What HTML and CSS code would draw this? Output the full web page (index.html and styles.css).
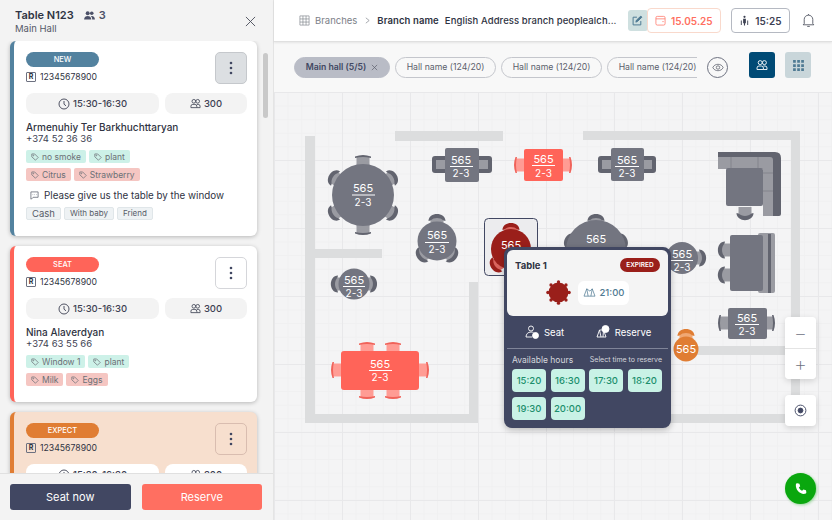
FILE: index.html
```html
<!DOCTYPE html>
<html lang="en">
<head>
<meta charset="UTF-8">
<meta name="viewport" content="width=device-width, initial-scale=1.0">
<title>Table N123</title>
<link rel="stylesheet" href="styles.css">
</head>
<body>

<!-- Shared icons -->
<svg class="sprite" width="0" height="0">
  <defs>
    <symbol id="i-clock" viewBox="0 0 12 12"><circle cx="6" cy="6" r="5"/><path d="M6 3v3.2l2 1.6"/></symbol>
    <symbol id="i-people" viewBox="0 0 12 12"><circle cx="4.2" cy="3.6" r="2"/><circle cx="8.4" cy="3.6" r="2"/><path d="M1 10.5V9a2 2 0 0 1 2-2h2.400a2 2 0 0 1 2 2v1.500zM7.400 7H9a2 2 0 0 1 2 2v1.500H7.400"/></symbol>
    <symbol id="i-tag" viewBox="0 0 10 10"><path d="M1 1.200h3.600L9 5.600 5.600 9 1 4.800z"/><circle cx="3" cy="3.200" r=".5"/></symbol>
    <symbol id="i-kebab" viewBox="0 0 4 14"><circle cx="2" cy="2" r="1.300"/><circle cx="2" cy="7" r="1.300"/><circle cx="2" cy="12" r="1.300"/></symbol>
    <symbol id="i-chair" viewBox="-10 -6 20 16" overflow="visible">
      <path class="seat" d="M-6.500 1C-3 -1.500 3 -1.500 6.500 1L6.500 9H-6.500z"/>
      <path class="back" d="M-8.500 3C-8.500 -6.500 8.500 -6.500 8.500 3L6.500 2.500C3 -.8 -3 -.8 -6.500 2.500z"/>
    </symbol>
    <symbol id="i-flat" viewBox="-10 -6 20 16" overflow="visible">
      <path class="seat" d="M-6.500 -2H6.500V9H-6.500z"/>
      <path class="back" d="M-8 -2.500Q0 -5.500 8 -2.500L8 -1Q0 -3 -8 -1z"/>
    </symbol>
  </defs>
</svg>

<div class="app">

  <aside class="side">
    <div class="side-head">
      <div>
        <div class="side-title">
          <b>Table N123</b>
          <svg class="ico-people-solid" viewBox="0 0 12 10"><circle cx="4" cy="2.500" r="2.200"/><circle cx="8.500" cy="2.500" r="2"/><path d="M0 9.500C0 6.500 2 5.500 4 5.500s4 1 4 4zM9 9.500C9 7.500 8.500 6.500 7.500 5.700 10 5 12 6.500 12 9.500z"/></svg>
          <b class="side-count">3</b>
        </div>
        <div class="side-sub">Main Hall</div>
      </div>
      <svg class="ico-close" viewBox="0 0 12 12"><path d="M1 1l10 10M11 1L1 11"/></svg>
    </div>

    <div class="cards">
      <div class="card card-new">
        <div class="card-top">
          <div>
            <div class="badge">NEW</div>
            <div class="ref"><span class="ref-r">R</span>12345678900</div>
          </div>
          <button class="kebab"><svg class="ico-kebab"><use href="#i-kebab"/></svg></button>
        </div>
        <div class="pills">
          <div class="pill pill-time"><svg class="ico-line ico-14"><use href="#i-clock"/></svg>15:30-16:30</div>
          <div class="pill pill-guests"><svg class="ico-line ico-12"><use href="#i-people"/></svg>300</div>
        </div>
        <div class="guest">Armenuhiy Ter Barkhuchttaryan</div>
        <div class="phone">+374 52 36 36</div>
        <div class="tags">
          <span class="tag tag-green"><svg class="ico-line ico-9"><use href="#i-tag"/></svg>no smoke</span>
          <span class="tag tag-green"><svg class="ico-line ico-9"><use href="#i-tag"/></svg>plant</span>
        </div>
        <div class="tags">
          <span class="tag tag-red"><svg class="ico-line ico-9"><use href="#i-tag"/></svg>Citrus</span>
          <span class="tag tag-red"><svg class="ico-line ico-9"><use href="#i-tag"/></svg>Strawberry</span>
        </div>
        <div class="note">
          <svg class="ico-note" viewBox="0 0 10 10"><path d="M1 1h8v6H3.500L1.500 9H1z"/><path d="M3 4h.5M5 4h.5M7 4h.5"/></svg>
          Please give us the table by the window
        </div>
        <div class="chips">
          <span class="chip chip-big">Cash</span>
          <span class="chip">With baby</span>
          <span class="chip">Friend</span>
        </div>
      </div>

      <div class="card card-seat">
        <div class="card-top">
          <div>
            <div class="badge">SEAT</div>
            <div class="ref"><span class="ref-r">R</span>12345678900</div>
          </div>
          <button class="kebab"><svg class="ico-kebab"><use href="#i-kebab"/></svg></button>
        </div>
        <div class="pills">
          <div class="pill pill-time"><svg class="ico-line ico-14"><use href="#i-clock"/></svg>15:30-16:30</div>
          <div class="pill pill-guests"><svg class="ico-line ico-12"><use href="#i-people"/></svg>300</div>
        </div>
        <div class="guest">Nina Alaverdyan</div>
        <div class="phone">+374 63 55 66</div>
        <div class="tags">
          <span class="tag tag-green"><svg class="ico-line ico-9"><use href="#i-tag"/></svg>Window 1</span>
          <span class="tag tag-green"><svg class="ico-line ico-9"><use href="#i-tag"/></svg>plant</span>
        </div>
        <div class="tags">
          <span class="tag tag-red"><svg class="ico-line ico-9"><use href="#i-tag"/></svg>Milk</span>
          <span class="tag tag-red"><svg class="ico-line ico-9"><use href="#i-tag"/></svg>Eggs</span>
        </div>
      </div>

      <div class="card card-expect">
        <div class="card-top">
          <div>
            <div class="badge">EXPECT</div>
            <div class="ref"><span class="ref-r">R</span>12345678900</div>
          </div>
          <button class="kebab"><svg class="ico-kebab"><use href="#i-kebab"/></svg></button>
        </div>
        <div class="pills">
          <div class="pill pill-time"><svg class="ico-line ico-14"><use href="#i-clock"/></svg>15:30-16:30</div>
          <div class="pill pill-guests"><svg class="ico-line ico-12"><use href="#i-people"/></svg>300</div>
        </div>
      </div>

      <div class="scroll-thumb"></div>
    </div>

    <div class="side-foot">
      <button class="btn btn-seat">Seat now</button>
      <button class="btn btn-reserve">Reserve</button>
    </div>
  </aside>

  <main class="main">
    <header class="topbar">
      <svg class="ico-branches" viewBox="0 0 12 12"><path d="M1 1h10v10H1zM1 4.300h10M1 7.700h10M4.300 1v10M7.700 1v10"/></svg>
      <span class="crumb">Branches</span>
      <svg class="ico-chev" viewBox="0 0 6 8"><path d="M1 .8L5 4 1 7.200"/></svg>
      <b class="crumb-name">Branch name</b>
      <span class="crumb-addr">English Address branch peoplealch...</span>
      <div class="edit">
        <svg viewBox="0 0 10 10"><path d="M8 5.500V9H1V2h3.500"/><path class="edit-pen" d="M3.500 6.500L4 4.800 8 1l1 1-4 3.800z"/></svg>
      </div>
      <div class="date">
        <svg viewBox="0 0 12 12"><rect x="1" y="1.500" width="10" height="9.500" rx="1.500"/><path d="M1 4.200h10M8 7.200h1.500"/></svg>
        15.05.25
      </div>
      <div class="clock">
        <svg viewBox="0 0 12 12"><circle cx="6" cy="2" r="1.200"/><path d="M4.500 4.200h3V9h-3zM2 6h1v5H2zM9 6h1v5H9zM5.400 9h1.200v2.500H5.400z"/></svg>
        15:25
      </div>
      <svg class="ico-bell" viewBox="0 0 12 14"><path d="M2 10V6a4 4 0 0 1 8 0v4l1 1H1zM6 1v1M4.800 12.500h2.400"/></svg>
    </header>

    <div class="hallbar">
      <div class="halls">
        <span class="hall hall-on">Main hall (5/5)<svg class="ico-x" viewBox="0 0 8 8"><path d="M1 1l6 6M7 1L1 7"/></svg></span>
        <span class="hall">Hall name (124/20)</span>
        <span class="hall">Hall name (124/20)</span>
        <span class="hall">Hall name (124/20)</span>
      </div>
      <div class="eye">
        <svg viewBox="0 0 14 10"><path d="M1 5c2-5 10-5 12 0-2 5-10 5-12 0z"/><circle cx="7" cy="5" r="2"/></svg>
      </div>
      <button class="view view-on">
        <svg class="ico-line ico-14"><use href="#i-people"/></svg>
      </button>
      <button class="view view-off">
        <svg viewBox="0 0 12 12"><path d="M1 1h2.500v2.500H1zM4.800 1h2.500v2.500H4.800zM8.500 1H11v2.500H8.500zM1 4.800h2.500v2.500H1zM4.800 4.800h2.500v2.500H4.800zM8.500 4.800H11v2.500H8.500zM1 8.500h2.500V11H1zM4.800 8.500h2.500V11H4.800zM8.500 8.500H11V11H8.500z"/></svg>
      </button>
    </div>

    <div class="canvas">
      <!-- Floor plan, coordinates are window pixels -->
      <svg class="floor" viewBox="274 92 558 428">
        <g class="walls">
          <rect x="395" y="131" width="108" height="10"/>
          <rect x="305" y="136" width="10" height="287"/>
          <rect x="305" y="249" width="77" height="9"/>
          <rect x="305" y="414" width="173" height="9"/>
          <rect x="469" y="282" width="9" height="141"/>
          <rect x="583" y="131" width="217" height="9"/>
          <rect x="791" y="131" width="9" height="292"/>
          <rect x="680" y="346" width="120" height="9"/>
          <rect x="660" y="414" width="140" height="9"/>
        </g>

        <!-- big round -->
        <g class="t-gray">
          <use href="#i-flat" x="-10" y="-6" width="20" height="16" transform="translate(363 159)"/>
          <use href="#i-flat" x="-10" y="-6" width="20" height="16" transform="translate(363 231) rotate(180)"/>
          <use href="#i-chair" x="-10" y="-6" width="20" height="16" transform="translate(333 177) rotate(-58)"/>
          <use href="#i-chair" x="-10" y="-6" width="20" height="16" transform="translate(393 177) rotate(58)"/>
          <use href="#i-chair" x="-10" y="-6" width="20" height="16" transform="translate(333 214) rotate(-122)"/>
          <use href="#i-chair" x="-10" y="-6" width="20" height="16" transform="translate(393 214) rotate(122)"/>
          <circle class="top" cx="363" cy="195" r="31"/>
          <text class="num" x="363" y="192">565</text><path class="rule" d="M352 195h23"/><text class="cap" x="363" y="206">2-3</text>
        </g>

        <!-- rect 2 chairs -->
        <g class="t-gray">
          <rect class="back" x="432" y="156" width="60" height="17" rx="3"/>
          <rect class="seat" x="436" y="160" width="52" height="9"/>
          <rect class="top" x="445" y="148" width="34" height="34" rx="2"/>
          <text class="num" x="461" y="164">565</text><path class="rule" d="M450 166.500h23"/><text class="cap" x="461" y="177">2-3</text>
        </g>

        <g class="t-red">
          <use href="#i-flat" x="-10" y="-6" width="20" height="16" transform="translate(518 165) rotate(-90)"/>
          <use href="#i-flat" x="-10" y="-6" width="20" height="16" transform="translate(568 165) rotate(90)"/>
          <rect class="top" x="524" y="149" width="39" height="32" rx="2"/>
          <text class="num" x="543.500" y="163">565</text><path class="rule" d="M532 165.500h23"/><text class="cap" x="543.500" y="177">2-3</text>
        </g>

        <g class="t-gray">
          <rect class="back" x="598" y="156" width="58" height="17" rx="3"/>
          <rect class="seat" x="602" y="160" width="50" height="9"/>
          <rect class="top" x="611" y="148" width="33" height="33" rx="2"/>
          <text class="num" x="627" y="164">565</text><path class="rule" d="M615 166.500h24"/><text class="cap" x="627" y="177">2-3</text>
        </g>

        <!-- three seat round -->
        <g class="t-gray">
          <use href="#i-chair" x="-10" y="-6" width="20" height="16" transform="translate(437 218)"/>
          <use href="#i-chair" x="-10" y="-6" width="20" height="16" transform="translate(421 256) rotate(-125)"/>
          <use href="#i-chair" x="-10" y="-6" width="20" height="16" transform="translate(453 256) rotate(125)"/>
          <circle class="top" cx="437" cy="241" r="19.500"/>
          <text class="num" x="437" y="239">565</text><path class="rule" d="M425 242.500h24"/><text class="cap" x="437" y="253">2-3</text>
        </g>

        <!-- selected table -->
        <rect class="picked" x="484.500" y="218.500" width="53" height="57" rx="4"/>
        <g class="t-dark">
          <use href="#i-chair" x="-10" y="-6" width="20" height="16" transform="translate(511 227)"/>
          <use href="#i-chair" x="-10" y="-6" width="20" height="16" transform="translate(495 266) rotate(-125)"/>
          <circle class="top" cx="511" cy="249" r="20"/>
          <text class="num" x="511" y="249">565</text>
        </g>

        <g class="t-gray">
          <use href="#i-chair" x="-10" y="-6" width="20" height="16" transform="translate(596 218)"/>
          <use href="#i-chair" x="-10" y="-6" width="20" height="16" transform="translate(569 240) rotate(-60)"/>
          <use href="#i-chair" x="-10" y="-6" width="20" height="16" transform="translate(623 240) rotate(60)"/>
          <circle class="top" cx="596" cy="250" r="30"/>
          <text class="num" x="596" y="243">565</text>
        </g>

        <g class="t-gray">
          <use href="#i-chair" x="-10" y="-6" width="20" height="16" transform="translate(335 284) rotate(-90)"/>
          <use href="#i-chair" x="-10" y="-6" width="20" height="16" transform="translate(373 284) rotate(90)"/>
          <circle class="top" cx="354" cy="284" r="15.500"/>
          <text class="num" x="354" y="284">565</text><path class="rule" d="M343 286.500h22"/><text class="cap" x="354" y="297">2-3</text>
        </g>

        <g class="t-gray">
          <use href="#i-chair" x="-10" y="-6" width="20" height="16" transform="translate(664 258) rotate(-90)"/>
          <use href="#i-chair" x="-10" y="-6" width="20" height="16" transform="translate(702 258) rotate(90)"/>
          <circle class="top" cx="682" cy="258" r="16"/>
          <text class="num" x="682" y="258">565</text><path class="rule" d="M671 260.500h22"/><text class="cap" x="682" y="271">2-3</text>
        </g>

        <!-- long table -->
        <g class="t-red">
          <use href="#i-flat" x="-10" y="-6" width="20" height="16" transform="translate(367 346)"/>
          <use href="#i-flat" x="-10" y="-6" width="20" height="16" transform="translate(393 346)"/>
          <use href="#i-flat" x="-10" y="-6" width="20" height="16" transform="translate(367 395) rotate(180)"/>
          <use href="#i-flat" x="-10" y="-6" width="20" height="16" transform="translate(393 395) rotate(180)"/>
          <use href="#i-flat" x="-10" y="-6" width="20" height="16" transform="translate(335 370) rotate(-90)"/>
          <use href="#i-flat" x="-10" y="-6" width="20" height="16" transform="translate(425 370) rotate(90)"/>
          <rect class="top" x="341" y="351" width="78" height="39" rx="3"/>
          <text class="num" x="380" y="368">565</text><path class="rule" d="M369 370.500h23"/><text class="cap" x="380" y="381">2-3</text>
        </g>

        <g class="t-gray">
          <use href="#i-flat" x="-10" y="-6" width="20" height="16" transform="translate(722 323) rotate(-90)"/>
          <use href="#i-flat" x="-10" y="-6" width="20" height="16" transform="translate(771 323) rotate(90)"/>
          <rect class="top" x="728" y="308" width="39" height="31" rx="2"/>
          <text class="num" x="747" y="322">565</text><path class="rule" d="M735 324.500h24"/><text class="cap" x="747" y="335">2-3</text>
        </g>

        <!-- corner sofa -->
        <g class="t-gray">
          <path class="seat" d="M718 157H773V216H763V169H718z"/>
          <path class="back" d="M718 152h57q6 0 6 6v56q0 2-2 2h-6V160q0-3-3-3H718z"/>
          <path class="sofa-line" d="M731 157v11M758 157v11M763 173h10M763 191h10"/>
          <use href="#i-chair" x="-10" y="-6" width="20" height="16" transform="translate(745 216) rotate(180)"/>
          <rect class="top" x="726" y="168" width="37" height="38" rx="2"/>
        </g>

        <g class="t-gray">
          <rect class="seat" x="758" y="233" width="17" height="60" rx="2"/>
          <rect class="back" x="768" y="234" width="3" height="59"/>
          <use href="#i-chair" x="-10" y="-6" width="20" height="16" transform="translate(722 250) rotate(-90)"/>
          <use href="#i-chair" x="-10" y="-6" width="20" height="16" transform="translate(722 275) rotate(-90)"/>
          <rect class="top" x="730" y="235" width="33" height="56" rx="2"/>
        </g>

        <g class="t-orange">
          <use href="#i-chair" x="-10" y="-6" width="20" height="16" transform="translate(686 333)"/>
          <circle class="top" cx="686" cy="349" r="12.500"/>
          <text class="num" x="686" y="353">565</text>
        </g>
      </svg>

      <!-- Table popup -->
      <div class="popup">
        <div class="pop-head">
          <div class="pop-title"><b>Table 1</b><span class="expired">EXPIRED</span></div>
          <div class="pop-info">
            <svg class="pop-dish" viewBox="0 0 24 24">
              <circle cx="12" cy="12" r="9.500"/>
              <circle cx="12" cy="1.800" r="1.600"/><circle cx="12" cy="22.200" r="1.600"/><circle cx="1.800" cy="12" r="1.600"/><circle cx="22.200" cy="12" r="1.600"/>
              <circle cx="4.800" cy="4.800" r="1.600"/><circle cx="19.200" cy="4.800" r="1.600"/><circle cx="4.800" cy="19.200" r="1.600"/><circle cx="19.200" cy="19.200" r="1.600"/>
            </svg>
            <div class="pop-time">
              <svg viewBox="0 0 14 12"><path d="M1 10L4 2l3.500 2.500L10 2l3 8zM4 2l1.500 8M10 2L8.500 10"/></svg>
              21:00
            </div>
          </div>
        </div>
        <div class="pop-actions">
          <div class="pop-act pop-act-seat">
            <svg viewBox="0 0 14 14"><circle cx="6" cy="3.500" r="2.500"/><path d="M1 12c0-3 2-5 5-5 1 0 2 .2 2.500.6M1 12h6"/><circle class="fill" cx="10.500" cy="10.500" r="3"/></svg>
            Seat
          </div>
          <div class="pop-act">
            <svg viewBox="0 0 14 14"><path d="M1 12L3.500 5h4L10 12zM3.500 5L5 12M7.500 5L7 12"/><circle class="fill" cx="9.500" cy="4" r="3.500"/></svg>
            Reserve
          </div>
        </div>
        <div class="pop-hours">
          <div class="pop-labels"><span>Available hours</span><small>Select time to reserve</small></div>
          <div class="slots">
            <span class="slot">15:20</span>
            <span class="slot">16:30</span>
            <span class="slot">17:30</span>
            <span class="slot">18:20</span>
            <span class="slot">19:30</span>
            <span class="slot">20:00</span>
          </div>
        </div>
      </div>

      <!-- Map controls -->
      <div class="zoombox">
        <button class="ctl">&minus;</button>
        <button class="ctl">+</button>
      </div>
      <button class="ctl locate">
        <svg viewBox="0 0 14 14"><circle cx="7" cy="7" r="5.800"/><circle class="fill" cx="7" cy="7" r="2.600"/></svg>
      </button>
      <button class="call">
        <svg viewBox="0 0 24 24"><path d="M6.600 3.500l3 .5 1.200 4-2 1.800c1 2.200 2.700 3.900 4.900 4.900l1.800-2 4 1.200.5 3c.1 1-.6 2.100-1.800 2.300C10.600 20.500 3.500 13.400 4.300 5.300c.2-1.200 1.300-1.900 2.300-1.800z"/></svg>
      </button>
    </div>
  </main>
</div>

</body>
</html>
```

FILE: styles.css
```css
* {
  box-sizing: border-box;
}
html, body {
  margin: 0;
  height: 100%;
}
body {
  font-family: Inter, "Open Sans", sans-serif;
  color: #2f3342;
  overflow: hidden;
}
button {
  font-family: inherit;
  padding: 0;
  border: none;
  cursor: pointer;
}
.sprite {
  position: absolute;
}
.app {
  display: flex;
  width: 832px;
  height: 520px;
}

/* Sidebar */
.side {
  width: 274px;
  flex: none;
  display: flex;
  flex-direction: column;
  background-color: #f3f3f3;
  border-right: 1px solid #e4e4e4;
}
.side-head {
  height: 41px;
  flex: none;
  display: flex;
  justify-content: space-between;
  padding: 8px 17px 0 15px;
}
.side-title {
  display: flex;
  align-items: center;
  gap: 4px;
  font-size: 11px;
  font-weight: 600;
  line-height: 14px;
}
.side-title b {
  font-weight: 600;
}
.side-count {
  color: #4c5168;
}
.side-sub {
  font-size: 9.500px;
  line-height: 13px;
  color: #555967;
}
.ico-people-solid {
  width: 11px;
  height: 9px;
  margin-left: 6px;
  fill: #4c5168;
}
.ico-close {
  width: 11px;
  height: 11px;
  margin-top: 8px;
  fill: none;
  stroke: #4b4f5c;
  stroke-width: 1;
}
.cards {
  position: relative;
  flex: 1;
  min-height: 0;
  overflow: hidden;
  display: flex;
  flex-direction: column;
  gap: 10px;
  padding: 0 16px 0 10px;
}
.scroll-thumb {
  position: absolute;
  left: 263px;
  top: 12px;
  width: 5px;
  height: 65px;
  border-radius: 3px;
  background-color: #c9c9c9;
}
.card {
  flex: none;
  background-color: #fff;
  border-left: 4px solid #53829f;
  border-radius: 6px;
  box-shadow: 0 1px 4px rgba(0, 0, 0, 0.25);
  padding: 11px 10px 16px 12px;
}
.card-seat {
  border-left-color: #ff6459;
}
.card-expect {
  border-left-color: #e07d33;
  background-color: #f7dfce;
}
.card-top {
  display: flex;
  justify-content: space-between;
  height: 32px;
}
.badge {
  width: 73px;
  height: 15px;
  border-radius: 8px;
  background-color: #53829f;
  color: #fff;
  font-size: 7.500px;
  font-weight: 500;
  line-height: 15px;
  text-align: center;
}
.card-seat .badge {
  background-color: #ff6459;
}
.card-expect .badge {
  background-color: #e07d33;
}
.ref {
  display: flex;
  align-items: center;
  gap: 4px;
  margin-top: 5px;
  font-size: 8.700px;
  line-height: 10px;
}
.ref-r {
  width: 10px;
  height: 10px;
  border: 1px solid #6d7180;
  border-radius: 1px;
  font-size: 7px;
  font-weight: 700;
  line-height: 8px;
  text-align: center;
}
.kebab {
  width: 32px;
  height: 32px;
  display: flex;
  align-items: center;
  justify-content: center;
  background-color: #fff;
  border: 1px solid #d5d6da;
  border-radius: 5px;
}
.card-new .kebab {
  background-color: #dcdfe2;
  border-color: #c5c8cc;
}
.card-expect .kebab {
  background-color: transparent;
  border-color: #d9bdb0;
}
.ico-kebab {
  width: 4px;
  height: 14px;
  fill: #414762;
}
.pills {
  display: flex;
  gap: 6px;
  margin-top: 9px;
}
.pill {
  height: 21px;
  display: flex;
  align-items: center;
  justify-content: center;
  gap: 3px;
  background-color: #f3f3f3;
  border-radius: 8px;
  font-size: 9.500px;
  font-weight: 500;
  color: #3d4152;
}
.pill-time {
  width: 133px;
}
.pill-guests {
  width: 82px;
}
.card-expect .pill {
  background-color: #fff;
}
.ico-line {
  fill: none;
  stroke: currentColor;
  stroke-width: 0.9;
}
.ico-14 {
  width: 12px;
  height: 12px;
}
.ico-12 {
  width: 11px;
  height: 11px;
}
.ico-9 {
  width: 8px;
  height: 8px;
}
.guest {
  margin-top: 7px;
  font-size: 10px;
  font-weight: 500;
  line-height: 12px;
}
.phone {
  font-size: 9.500px;
  font-weight: 400;
  line-height: 12px;
  color: #3d4152;
}
.tags {
  display: flex;
  gap: 3px;
  margin-top: 5px;
}
.tag {
  height: 13px;
  display: flex;
  align-items: center;
  gap: 3px;
  padding: 0 5px;
  border-radius: 2px;
  font-size: 8.500px;
  color: #6b7076;
}
.tag-green {
  background-color: #cdf1e8;
}
.tag-red {
  background-color: #f5c6c2;
}
.note {
  display: flex;
  align-items: center;
  gap: 5px;
  margin-top: 8px;
  padding-left: 4px;
  font-size: 9.800px;
  line-height: 13px;
}
.ico-note {
  width: 9px;
  height: 9px;
  fill: none;
  stroke: #555967;
  stroke-width: 0.8;
}
.chips {
  display: flex;
  gap: 3px;
  margin-top: 5px;
}
.chip {
  height: 13px;
  padding: 0 5px;
  background-color: #eef2f4;
  border: 1px solid #e0e6e9;
  border-radius: 2px;
  font-size: 8px;
  line-height: 11px;
  color: #585c68;
}
.chip-big {
  font-size: 9.500px;
}
.side-foot {
  height: 47px;
  flex: none;
  display: flex;
  gap: 11px;
  padding: 10px 11px 0 10px;
  border-top: 1px solid #e0e0e0;
  background-color: #f3f3f3;
  position: relative;
}
.btn {
  width: 121px;
  height: 26px;
  border-radius: 3px;
  color: #fff;
  font-size: 11px;
  font-weight: 400;
}
.btn-seat {
  background-color: #414762;
}
.btn-reserve {
  background-color: #ff6f61;
}

/* Top bar */
.main {
  flex: 1;
  min-width: 0;
  display: flex;
  flex-direction: column;
}
.topbar {
  height: 42px;
  flex: none;
  display: flex;
  align-items: center;
  padding-left: 25px;
  background-color: #fff;
  border-bottom: 1px solid #e0e0e0;
  box-shadow: 0 1px 2px rgba(0, 0, 0, 0.08);
  position: relative;
  z-index: 2;
  font-size: 9.500px;
  white-space: nowrap;
}
.ico-branches {
  width: 11px;
  height: 11px;
  fill: none;
  stroke: #7c8088;
  stroke-width: 0.7;
}
.crumb {
  margin-left: 5px;
  color: #7c8088;
}
.ico-chev {
  width: 5px;
  height: 7px;
  margin: 0 7px 0 8px;
  fill: none;
  stroke: #7c8088;
  stroke-width: 0.8;
}
.crumb-name {
  font-weight: 600;
  letter-spacing: 0.1px;
}
.crumb-addr {
  width: 183px;
  margin-left: 6px;
  font-weight: 500;
  letter-spacing: 0.08px;
}
.edit {
  width: 20px;
  height: 21px;
  display: flex;
  align-items: center;
  justify-content: center;
  background-color: #cfe0e0;
  border-radius: 3px;
}
.edit svg {
  width: 11px;
  height: 11px;
  fill: none;
  stroke: #4f7a93;
  stroke-width: 0.9;
}
.edit .edit-pen {
  fill: #4f7a93;
}
.date {
  width: 74px;
  height: 25px;
  margin-left: -1px;
  position: relative;
  display: flex;
  align-items: center;
  justify-content: center;
  gap: 5px;
  background-color: #fff;
  border: 1px solid #f9d9cc;
  border-radius: 4px;
  color: #ff6f61;
  font-size: 10px;
  font-weight: 600;
}
.date svg {
  width: 11px;
  height: 11px;
  fill: none;
  stroke: #ff6f61;
  stroke-width: 0.8;
}
.clock {
  width: 59px;
  height: 25px;
  margin-left: 10px;
  display: flex;
  align-items: center;
  justify-content: center;
  gap: 5px;
  border: 1px solid #b5b9c2;
  border-radius: 4px;
  font-size: 10px;
  font-weight: 600;
  color: #3d4152;
}
.clock svg {
  width: 11px;
  height: 11px;
  fill: #3d4152;
}
.ico-bell {
  width: 13px;
  height: 15px;
  margin-left: 12px;
  fill: none;
  stroke: #4b4f5c;
  stroke-width: 0.8;
}

/* Hall tabs */
.hallbar {
  height: 50px;
  flex: none;
  display: flex;
  align-items: flex-start;
  padding: 10px 0 0 20px;
  background-color: #f8f8f8;
}
.halls {
  width: 403px;
  height: 21px;
  margin-top: 5px;
  overflow: hidden;
  display: flex;
  gap: 5px;
}
.hall {
  flex: none;
  width: 101px;
  height: 21px;
  border: 1px solid #c4c6cc;
  border-radius: 11px;
  font-size: 8.700px;
  line-height: 19px;
  text-align: center;
  color: #5b5f6c;
  white-space: nowrap;
}
.hall-on {
  width: 96px;
  display: flex;
  align-items: center;
  justify-content: center;
  gap: 5px;
  background-color: #b9bcc6;
  border-color: #b9bcc6;
  color: #414762;
  font-weight: 600;
}
.ico-x {
  width: 7px;
  height: 7px;
  fill: none;
  stroke: #5b5f6c;
  stroke-width: 0.8;
}
.eye {
  width: 21px;
  height: 21px;
  margin: 5px 0 0 10px;
  display: flex;
  align-items: center;
  justify-content: center;
  border: 1px solid #6d7180;
  border-radius: 50%;
}
.eye svg {
  width: 12px;
  height: 9px;
  fill: none;
  stroke: #4b4f5c;
  stroke-width: 0.8;
}
.view {
  width: 26px;
  height: 26px;
  display: flex;
  align-items: center;
  justify-content: center;
  border-radius: 3px;
  margin-left: 21px;
}
.view + .view {
  margin-left: 10px;
}
.view-on {
  background-color: #004a75;
  color: #fff;
}
.view-off {
  background-color: #c9d6da;
}
.view-off svg {
  width: 13px;
  height: 13px;
  fill: #4f7a93;
}

/* Floor */
.canvas {
  position: relative;
  flex: 1;
  min-height: 0;
  overflow: hidden;
  background-color: #f4f4f5;
  background-image:
    linear-gradient(#e8e8ea 1px, transparent 1px),
    linear-gradient(90deg, #e8e8ea 1px, transparent 1px),
    linear-gradient(#f0f0f1 1px, transparent 1px),
    linear-gradient(90deg, #f0f0f1 1px, transparent 1px);
  background-size: 68px 68px, 68px 68px, 13.600px 13.600px, 13.600px 13.600px;
}
.floor {
  position: absolute;
  left: 0;
  top: 0;
  width: 558px;
  height: 428px;
}
.walls rect {
  fill: #dcddde;
}
.t-gray {
  --top: #737580;
  --back: #62646f;
  --seat: #9a9ba2;
}
.t-red {
  --top: #ff6459;
  --back: #f0635a;
  --seat: #ff9c94;
}
.t-dark {
  --top: #9a1f1a;
  --back: #9a1f1a;
  --seat: #d9645d;
}
.t-orange {
  --top: #e07d33;
  --back: #e07d33;
  --seat: #f0a874;
}
.top {
  fill: var(--top);
}
.back {
  fill: var(--back);
}
.seat {
  fill: var(--seat);
}
.sofa-line {
  fill: none;
  stroke: #83848c;
  stroke-width: 1;
}
.num, .cap {
  fill: #fff;
  text-anchor: middle;
  font-size: 11px;
}
.cap {
  font-size: 10px;
}
.rule {
  fill: none;
  stroke: #fff;
  stroke-width: 1;
}
.picked {
  fill: #ececee;
  stroke: #414762;
  stroke-width: 1;
}

/* Popup */
.popup {
  position: absolute;
  left: 230px;
  top: 155px;
  width: 167px;
  height: 181px;
  padding: 3px;
  background-color: #414762;
  border-radius: 8px;
  box-shadow: 0 2px 6px rgba(0, 0, 0, 0.25);
  color: #fff;
}
.pop-head {
  height: 66px;
  background-color: #f4f4f4;
  border-radius: 6px;
  padding: 8px 8px 0;
  color: #2f3342;
}
.pop-title {
  display: flex;
  justify-content: space-between;
  align-items: center;
  font-size: 9.500px;
}
.expired {
  width: 40px;
  height: 14px;
  border-radius: 7px;
  background-color: #9a1f1a;
  color: #fff;
  font-size: 6.500px;
  font-weight: 600;
  line-height: 14px;
  text-align: center;
}
.pop-info {
  display: flex;
  justify-content: center;
  align-items: center;
  gap: 7px;
  margin-top: 8px;
}
.pop-dish {
  width: 25px;
  height: 25px;
  fill: #9a1f1a;
}
.pop-time {
  width: 51px;
  height: 24px;
  display: flex;
  align-items: center;
  justify-content: center;
  gap: 4px;
  background-color: #fff;
  border-radius: 6px;
  color: #4f7a93;
  font-size: 9.500px;
  font-weight: 500;
}
.pop-time svg {
  width: 13px;
  height: 11px;
  fill: none;
  stroke: #4f7a93;
  stroke-width: 0.8;
}
.pop-actions {
  height: 33px;
  display: flex;
  align-items: center;
  border-bottom: 1px solid #7f8498;
  font-size: 9.500px;
}
.pop-act {
  flex: 1;
  display: flex;
  align-items: center;
  justify-content: center;
  gap: 5px;
}
.pop-act-seat {
  flex: none;
  width: 72px;
  padding-left: 3px;
}
.pop-act svg {
  width: 14px;
  height: 14px;
  fill: none;
  stroke: #fff;
  stroke-width: 0.9;
}
.pop-act .fill {
  fill: #fff;
}
.pop-hours {
  padding: 5px 5px 0;
}
.pop-labels {
  display: flex;
  justify-content: space-between;
  align-items: center;
  font-size: 8.500px;
  line-height: 12px;
  color: #d5d7de;
}
.pop-labels small {
  font-size: 7px;
  padding-right: 1px;
}
.slots {
  display: grid;
  grid-template-columns: repeat(4, 34px);
  grid-auto-rows: 23px;
  gap: 5px 4.500px;
  margin-top: 3px;
}
.slot {
  background-color: #c9f2e6;
  border-radius: 4px;
  color: #1c8f6d;
  font-size: 9.500px;
  font-weight: 500;
  line-height: 23px;
  text-align: center;
}

/* Map controls */
.ctl {
  width: 31px;
  height: 31px;
  display: flex;
  align-items: center;
  justify-content: center;
  background-color: #fff;
  color: #6d7180;
  font-size: 20px;
  font-weight: 200;
}
.zoombox {
  position: absolute;
  left: 511px;
  top: 225px;
  border-radius: 4px;
  overflow: hidden;
  box-shadow: 0 2px 6px rgba(0, 0, 0, 0.15);
}
.zoombox .ctl + .ctl {
  border-top: 1px solid #e4e4e4;
}
.locate {
  position: absolute;
  left: 511px;
  top: 303px;
  border-radius: 4px;
  box-shadow: 0 2px 6px rgba(0, 0, 0, 0.15);
}
.locate svg {
  width: 13px;
  height: 13px;
  fill: none;
  stroke: #414762;
  stroke-width: 1;
}
.locate .fill {
  fill: #414762;
}
.call {
  position: absolute;
  left: 511px;
  top: 381px;
  width: 31px;
  height: 31px;
  display: flex;
  align-items: center;
  justify-content: center;
  border-radius: 50%;
  background-color: #0aa70e;
  box-shadow: 1px 1px 3px rgba(10, 167, 14, 0.4);
}
.call svg {
  width: 16px;
  height: 16px;
  fill: #fff;
}
```
